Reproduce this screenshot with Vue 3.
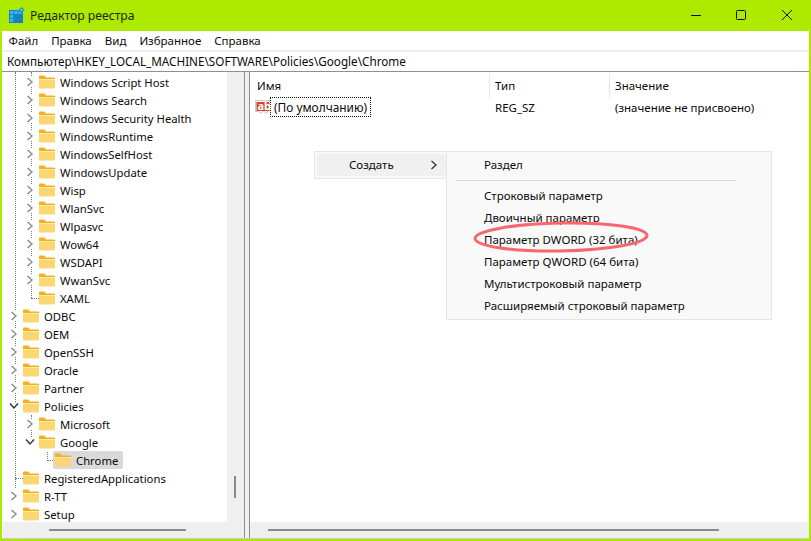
<script setup>
const rows = [
  { t: 'Windows Script Host', l: 2, c: 1 },
  { t: 'Windows Search', l: 2, c: 1 },
  { t: 'Windows Security Health', l: 2, c: 1 },
  { t: 'WindowsRuntime', l: 2, c: 1 },
  { t: 'WindowsSelfHost', l: 2, c: 1 },
  { t: 'WindowsUpdate', l: 2, c: 1 },
  { t: 'Wisp', l: 2, c: 1 },
  { t: 'WlanSvc', l: 2, c: 1 },
  { t: 'Wlpasvc', l: 2, c: 1 },
  { t: 'Wow64', l: 2, c: 1 },
  { t: 'WSDAPI', l: 2, c: 1 },
  { t: 'WwanSvc', l: 2, c: 1 },
  { t: 'XAML', l: 2, c: 0 },
  { t: 'ODBC', l: 1, c: 1 },
  { t: 'OEM', l: 1, c: 1 },
  { t: 'OpenSSH', l: 1, c: 1 },
  { t: 'Oracle', l: 1, c: 1 },
  { t: 'Partner', l: 1, c: 1 },
  { t: 'Policies', l: 1, c: 2 },
  { t: 'Microsoft', l: 2, c: 1 },
  { t: 'Google', l: 2, c: 2 },
  { t: 'Chrome', l: 3, c: 0, sel: true },
  { t: 'RegisteredApplications', l: 1, c: 0 },
  { t: 'R-TT', l: 1, c: 1 },
  { t: 'Setup', l: 1, c: 1 },
]
const menu = ['Файл', 'Правка', 'Вид', 'Избранное', 'Справка']
const items = ['Строковый параметр', 'Двоичный параметр', 'Параметр DWORD (32 бита)', 'Параметр QWORD (64 бита)', 'Мультистроковый параметр', 'Расширяемый строковый параметр']
</script>

<template>
  <div class="win">
    <header class="title">
      <svg class="appicon" width="16" height="16" viewBox="0 0 16 16">
        <rect x="0.500" y="3.500" width="13" height="12" fill="#35b7f0" stroke="#0f86c8" />
        <rect x="5" y="8" width="8.500" height="7.500" fill="#1a7fbf" />
        <path d="M4.800 3.500v12M9.200 3.500v12M.5 7.500h13M.5 11.500h13" stroke="#0f86c8" stroke-width="1" />
        <path d="M12.500 0l3 3-3 3-3-3z" fill="#1d8fcf" />
        <rect x="11.500" y="2" width="2" height="2" fill="#63c8f2" />
      </svg>
      <span class="title-text">Редактор реестра</span>
      <div class="caps">
        <svg class="cap" width="46" height="31" viewBox="0 0 46 31"><path d="M18 15.500h10" stroke="#111" /></svg>
        <svg class="cap" width="46" height="31" viewBox="0 0 46 31"><rect x="17.500" y="10.500" width="9" height="9" rx="1" fill="none" stroke="#111" /></svg>
        <svg class="cap" width="46" height="31" viewBox="0 0 46 31"><path d="M17 10l10 10M27 10L17 20" stroke="#111" /></svg>
      </div>
    </header>
    <nav class="menu"><span v-for="m in menu" :key="m">{{ m }}</span></nav>
    <div class="addr">Компьютер\HKEY_LOCAL_MACHINE\SOFTWARE\Policies\Google\Chrome</div>
    <main class="panes">
      <section class="left">
        <div class="tree-wrap">
          <div class="tree">
            <i class="vline v1"></i>
            <i class="vline v2"></i>
            <i class="vline v3"></i>
            <i class="vline v4"></i>
            <div v-for="r in rows" :key="r.t" class="row" :class="'lv' + r.l">
              <svg v-if="r.c === 1" class="chev" width="8" height="10" viewBox="0 0 8 10"><path d="M1.500 1l4.500 4-4.500 4" fill="none" stroke="#8a8a8a" stroke-width="1.400" /></svg>
              <svg v-else-if="r.c === 2" class="chev" width="10" height="8" viewBox="0 0 10 8"><path d="M1 1.500l4 4.500 4-4.500" fill="none" stroke="#333" stroke-width="1.400" /></svg>
              <i v-else class="hdots"></i>
              <div class="node" :class="{ sel: r.sel }">
                <svg class="folder" width="16" height="14" viewBox="0 0 16 14">
                  <path d="M0 1.500Q0 .5 1 .5h4.500l1.500 2h8q1 0 1 1V4H0z" fill="#f2b21c" />
                  <path d="M0 4h16v8.500q0 1-1 1H1q-1 0-1-1z" fill="#fbd774" />
                  <path d="M0 4h16v1H0z" fill="#fdeaa8" />
                </svg>
                <span>{{ r.t }}</span>
              </div>
            </div>
          </div>
          <div class="vscroll"><b></b></div>
        </div>
        <div class="hscroll"><b></b></div>
      </section>
      <section class="right">
        <div class="cols">
          <span class="c1 sepr">Имя</span><span class="c2 sepr">Тип</span><span class="c3">Значение</span>
        </div>
        <div class="val">
          <div class="c1 namecell">
            <svg width="16" height="16" viewBox="0 0 16 16">
              <path d="M.5 1.500h14v10l-3 2.500-3-1.500-3 1.500-2-1.500H.5z" fill="#f6f4f0" stroke="#cfccc6" />
              <rect x="1.500" y="3" width="12.500" height="9" fill="#d9442a" />
            </svg>
            <em class="ab">ab</em>
            <span class="focus">(По умолчанию)</span>
          </div>
          <span class="c2">REG_SZ</span>
          <span class="c3">(значение не присвоено)</span>
        </div>
        <div class="body">
          <div class="ctx">
            <div class="ctx-main">
              <div class="ctx-hi"><span>Создать</span>
                <svg width="8" height="10" viewBox="0 0 8 10"><path d="M1.500 1l4.500 4-4.500 4" fill="none" stroke="#333" stroke-width="1.300" /></svg>
              </div>
            </div>
            <div class="ctx-sub">
              <div class="it">Раздел</div>
              <div class="sep"></div>
              <div v-for="i in items" :key="i" class="it">{{ i }}</div>
              <svg class="ring" width="182" height="36" viewBox="0 0 182 36">
                <ellipse cx="91" cy="18" rx="86" ry="14" fill="none" stroke="#f8676d" stroke-width="3" transform="rotate(-1 91 18)" />
              </svg>
            </div>
          </div>
        </div>
        <div class="hscroll r"><b></b></div>
      </section>
    </main>
  </div>
</template>

<style>
html, body { margin: 0; background: #fff; }
</style>

<style scoped>
.win { width: 811px; height: 541px; box-sizing: border-box; background: #fff; border: 2px solid #aeea00; border-top: 0; display: flex; flex-direction: column; font: 11.500px "Noto Sans", "Open Sans", sans-serif; color: #0a0a0a; overflow: hidden; }
.title { height: 31px; margin: 0 -2px; background: #aeea00; display: flex; align-items: center; padding-left: 9px; flex: none; }
.appicon { margin: -1px 5px 0 0; }
.title-text { font-size: 12.200px; color: #1a2a00; }
.caps { margin-left: auto; display: flex; }
.menu { height: 19px; display: flex; gap: 13px; padding-left: 6.500px; align-items: center; flex: none; }
.addr { height: 19px; line-height: 19px; margin-top: 2px; padding-left: 5px; flex: none; font-size: 11.700px; box-shadow: 0 -2px 0 #efefef; }
.panes { flex: 1; min-height: 0; display: flex; gap: 4px; background: #f0f0f0; border-top: 1px solid #8f8f8f; border-bottom: 1px solid #c9c9c9; }
.left { width: 243px; flex: none; background: #fff; display: flex; flex-direction: column; border-right: 1px solid #8f8f8f; box-sizing: border-box; }
.tree-wrap { flex: 1; min-height: 0; display: flex; }
.tree { flex: 1; position: relative; padding-top: 1px; overflow: hidden; font-size: 11.300px; }
.row { height: 18px; display: flex; align-items: center; position: relative; }
.lv1 { padding-left: 7px; }
.lv2 { padding-left: 23px; }
.lv3 { padding-left: 39px; }
.chev { width: 10px; flex: none; background: #fff; }
.hdots { width: 8px; height: 0; flex: none; margin-left: 6px; margin-right: -4px; border-top: 1px dotted #777; }
.node { display: flex; align-items: center; gap: 5px; margin-left: 2px; height: 18px; padding: 0 3px 0 2px; border-radius: 2px; white-space: nowrap; position: relative; }
.node.sel { background: #d9d9d9; padding-right: 5px; }
.vline { position: absolute; width: 0; border-left: 1px dotted #777; }
.v1 { left: 13px; top: 0; height: 416px; }
.v2 { left: 29px; top: 0; height: 226px; }
.v3 { left: 29px; top: 343px; height: 28px; }
.v4 { left: 45px; top: 380px; height: 9px; }
.vscroll { width: 17px; background: #f0f0f0; position: relative; flex: none; }
.vscroll b { position: absolute; left: 7px; top: 404px; width: 2px; height: 22px; background: #8a8a8a; }
.hscroll { height: 16px; background: #efefef; flex: none; position: relative; }
.left .hscroll { margin-left: 1px; }
.hscroll b { position: absolute; left: 46px; top: 7px; width: 137px; height: 2px; background: #8a8a8a; }
.hscroll.r b { left: 18px; width: 451px; }
.right { flex: 1; min-width: 0; background: #fff; display: flex; flex-direction: column; border-left: 1px solid #8f8f8f; box-sizing: border-box; }
.cols, .val { display: flex; flex: none; align-items: center; }
.cols { height: 26px; padding-top: 1px; box-sizing: border-box; }
.val { height: 18px; }
.c1 { width: 240px; padding-left: 7px; box-sizing: border-box; flex: none; }
.c2 { width: 120px; padding-left: 5px; box-sizing: border-box; flex: none; }
.c3 { padding-left: 5px; }
.sepr { border-right: 1px solid #e5e5e5; height: 24px; line-height: 24px; }
.namecell { position: relative; display: flex; align-items: center; padding-left: 5px; }
.ab { position: absolute; left: 7.500px; top: 1px; color: #fff; font: bold 11px/13px "Noto Sans", sans-serif; }
.focus { outline: 1px dotted #111; padding: 0 3px; line-height: 18px; font-size: 11.900px; }
.body { flex: 1; min-height: 0; position: relative; }
.ctx { position: absolute; left: 64px; top: 35px; display: flex; align-items: flex-start; }
.ctx-main { width: 132px; height: 28px; box-sizing: border-box; background: #f9f9f9; border: 1px solid #e6e6e6; border-right: 0; padding: 2px 0 2px 2px; }
.ctx-hi { height: 22px; background: #f0f0f0; border-radius: 4px; display: flex; align-items: center; justify-content: space-between; padding: 0 8px 0 32px; }
.ctx-hi span { line-height: 22px; }
.ctx-sub { position: relative; width: 326px; height: 169px; box-sizing: border-box; background: #f9f9f9; border: 1px solid #e6e6e6; padding-top: 2px; }
.it { height: 22px; line-height: 22px; padding-left: 37px; }
.sep { height: 1px; background: #d9d9d9; margin: 4px 36px 4px 8px; }
.ring { position: absolute; left: 23px; top: 67px; }
</style>
